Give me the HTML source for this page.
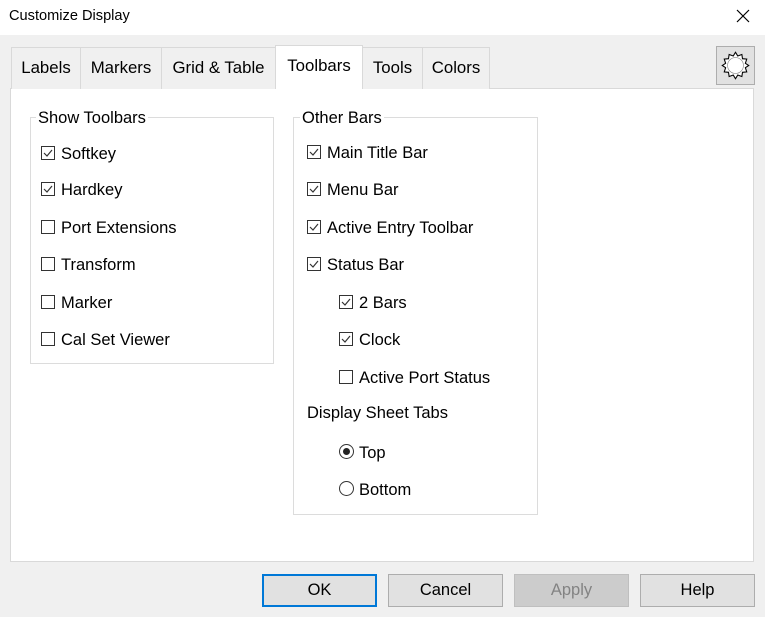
<!DOCTYPE html>
<html><head><style>
*{margin:0;padding:0;box-sizing:border-box}
body{width:765px;height:617px;background:#f0f0f0;font-family:"Liberation Sans",sans-serif;color:#000;position:relative;overflow:hidden}
.a{position:absolute;white-space:nowrap}
.title{left:0;top:0;width:765px;height:35px;background:#fff}
.tab{top:47px;height:42px;border:1px solid #d9d9d9;border-bottom:none;background:#f0f0f0;font-size:16.8px;line-height:40px;text-align:center}
.panel{left:10px;top:88px;width:744px;height:474px;background:#fff;border:1px solid #d9d9d9}
.grp{border:1px solid #dcdcdc}
.lg{font-size:16.5px;background:#fff;padding:0 2px;line-height:18px}
.cb{width:14px;height:14px;border:1px solid #333;background:#fff}
.t{font-size:16.5px;line-height:18px;margin-top:1px}
.btn{top:574px;height:33px;width:115px;border:1px solid #adadad;background:#e1e1e1;font-size:16.5px;line-height:31px;text-align:center}
.rd{width:15px;height:15px;border:1px solid #333;border-radius:50%;background:#fff}
</style></head><body>
<div class="a title"></div>
<div class="a" style="left:9px;top:8px;font-size:14.6px">Customize Display</div>
<svg class="a" style="left:736px;top:9px" width="14" height="14"><path d="M1 1L13 13M13 1L1 13" stroke="#000" stroke-width="1.2"/></svg>

<div class="a panel"></div>
<div class="a tab" style="left:11px;width:70px">Labels</div>
<div class="a tab" style="left:80px;width:82px">Markers</div>
<div class="a tab" style="left:161px;width:115px">Grid &amp; Table</div>
<div class="a tab" style="left:362px;width:61px">Tools</div>
<div class="a tab" style="left:422px;width:68px">Colors</div>
<div class="a tab" style="left:275px;top:45px;width:88px;height:44px;background:#fff;line-height:40px">Toolbars</div>

<div class="a" style="left:716px;top:46px;width:39px;height:39px;border:1px solid #adadad;background:#e1e1e1"></div>
<svg class="a" style="left:718px;top:48px" width="35" height="35" viewBox="0 0 33 33">
<polygon fill="#fff" stroke="#000" stroke-width="1" points="16.5,4 18.6,7.5 22.5,6.1 23.1,10.1 27.1,10.5 25.8,14.4 29,16.5 25.8,18.6 27.1,22.5 23.1,22.9 22.5,26.9 18.6,25.5 16.5,29 14.4,25.5 10.5,26.9 9.9,22.9 5.9,22.5 7.2,18.6 4,16.5 7.2,14.4 5.9,10.5 9.9,10.1 10.5,6.1 14.4,7.5"/>
<circle cx="16.5" cy="16.5" r="7.5" fill="#fff" stroke="#888" stroke-width=".6"/>
</svg>

<div class="a grp" style="left:30px;top:117px;width:244px;height:247px"></div>
<div class="a lg" style="left:36px;top:109px">Show Toolbars</div>
<div class="a grp" style="left:293px;top:117px;width:245px;height:398px"></div>
<div class="a lg" style="left:300px;top:109px">Other Bars</div>

<div class="a cb" style="left:41px;top:146px"></div><svg class="a" style="left:41px;top:146px" width="14" height="14"><path d="M3 7L6 10L11 4" stroke="#333" fill="none" stroke-width="1.2"/></svg><div class="a t" style="left:61px;top:144px">Softkey</div>
<div class="a cb" style="left:41px;top:182px"></div><svg class="a" style="left:41px;top:182px" width="14" height="14"><path d="M3 7L6 10L11 4" stroke="#333" fill="none" stroke-width="1.2"/></svg><div class="a t" style="left:61px;top:180px">Hardkey</div>
<div class="a cb" style="left:41px;top:220px"></div><div class="a t" style="left:61px;top:218px">Port Extensions</div>
<div class="a cb" style="left:41px;top:257px"></div><div class="a t" style="left:61px;top:255px">Transform</div>
<div class="a cb" style="left:41px;top:295px"></div><div class="a t" style="left:61px;top:293px">Marker</div>
<div class="a cb" style="left:41px;top:332px"></div><div class="a t" style="left:61px;top:330px">Cal Set Viewer</div>

<div class="a cb" style="left:307px;top:145px"></div><svg class="a" style="left:307px;top:145px" width="14" height="14"><path d="M3 7L6 10L11 4" stroke="#333" fill="none" stroke-width="1.2"/></svg><div class="a t" style="left:327px;top:143px">Main Title Bar</div>
<div class="a cb" style="left:307px;top:182px"></div><svg class="a" style="left:307px;top:182px" width="14" height="14"><path d="M3 7L6 10L11 4" stroke="#333" fill="none" stroke-width="1.2"/></svg><div class="a t" style="left:327px;top:180px">Menu Bar</div>
<div class="a cb" style="left:307px;top:220px"></div><svg class="a" style="left:307px;top:220px" width="14" height="14"><path d="M3 7L6 10L11 4" stroke="#333" fill="none" stroke-width="1.2"/></svg><div class="a t" style="left:327px;top:218px">Active Entry Toolbar</div>
<div class="a cb" style="left:307px;top:257px"></div><svg class="a" style="left:307px;top:257px" width="14" height="14"><path d="M3 7L6 10L11 4" stroke="#333" fill="none" stroke-width="1.2"/></svg><div class="a t" style="left:327px;top:255px">Status Bar</div>
<div class="a cb" style="left:339px;top:295px"></div><svg class="a" style="left:339px;top:295px" width="14" height="14"><path d="M3 7L6 10L11 4" stroke="#333" fill="none" stroke-width="1.2"/></svg><div class="a t" style="left:359px;top:293px">2 Bars</div>
<div class="a cb" style="left:339px;top:332px"></div><svg class="a" style="left:339px;top:332px" width="14" height="14"><path d="M3 7L6 10L11 4" stroke="#333" fill="none" stroke-width="1.2"/></svg><div class="a t" style="left:359px;top:330px">Clock</div>
<div class="a cb" style="left:339px;top:370px"></div><div class="a t" style="left:359px;top:368px">Active Port Status</div>
<div class="a t" style="left:307px;top:403px">Display Sheet Tabs</div>
<div class="a rd" style="left:339px;top:444px"></div><div class="a" style="left:343px;top:448px;width:7px;height:7px;border-radius:50%;background:#222"></div><div class="a t" style="left:359px;top:443px">Top</div>
<div class="a rd" style="left:339px;top:481px"></div><div class="a t" style="left:359px;top:480px">Bottom</div>

<div class="a btn" style="left:262px;border:2px solid #0078d7;line-height:29px">OK</div>
<div class="a btn" style="left:388px">Cancel</div>
<div class="a btn" style="left:514px;background:#cccccc;border-color:#bfbfbf;color:#838383">Apply</div>
<div class="a btn" style="left:640px">Help</div>
</body></html>
